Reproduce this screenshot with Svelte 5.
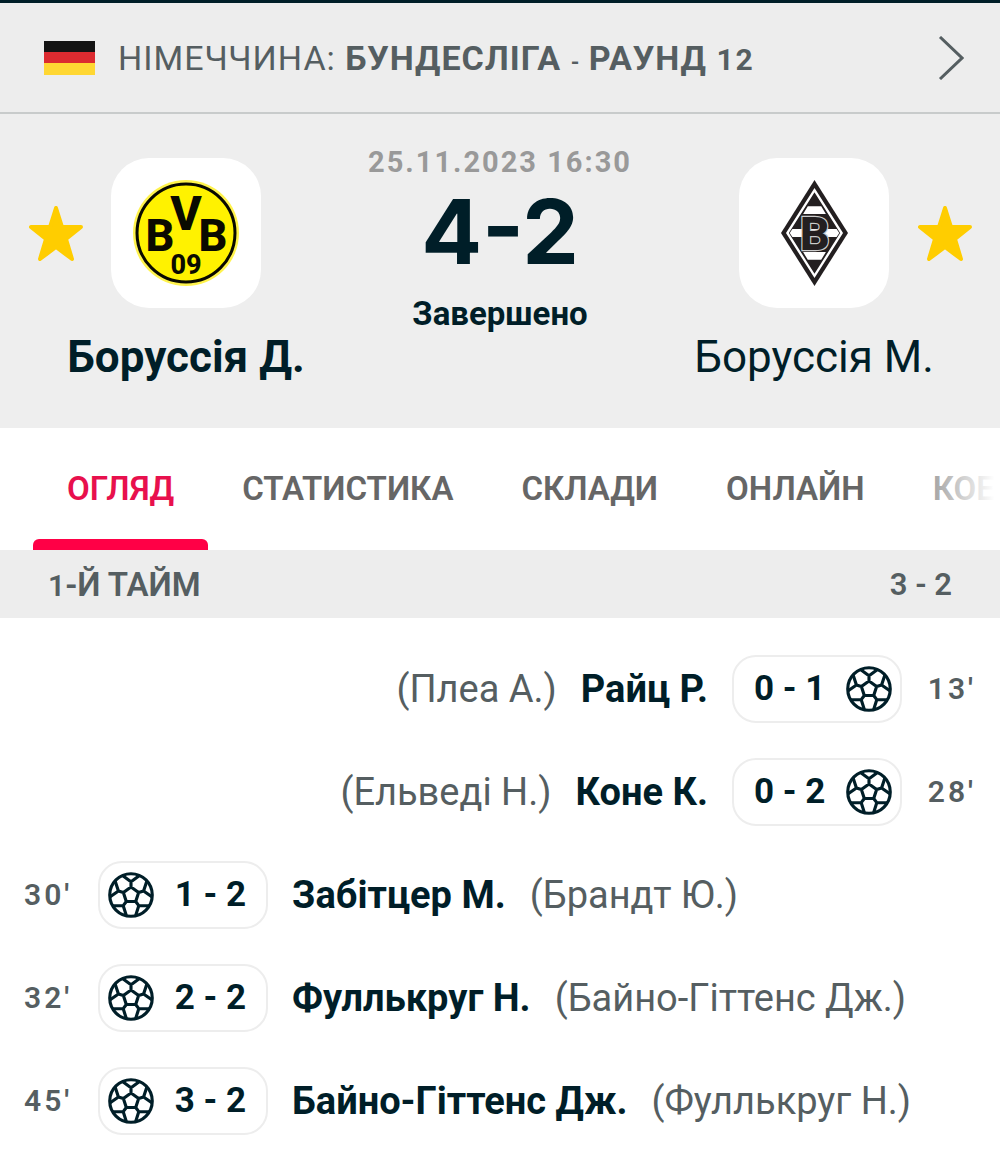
<script>
  const tabs = ['ОГЛЯД', 'СТАТИСТИКА', 'СКЛАДИ', 'ОНЛАЙН', 'КОЕФІЦІЄНТИ'];
  let active = $state(0);
  let favourites = $state([true, true]);

  const goals = [
    { side: 'away', minute: "13'", score: '0 - 1', player: 'Райц Р.', assist: '(Плеа А.)' },
    { side: 'away', minute: "28'", score: '0 - 2', player: 'Коне К.', assist: '(Ельведі Н.)' },
    { side: 'home', minute: "30'", score: '1 - 2', player: 'Забітцер М.', assist: '(Брандт Ю.)' },
    { side: 'home', minute: "32'", score: '2 - 2', player: 'Фуллькруг Н.', assist: '(Байно-Гіттенс Дж.)' },
    { side: 'home', minute: "45'", score: '3 - 2', player: 'Байно-Гіттенс Дж.', assist: '(Фуллькруг Н.)' }
  ];

  // Seams of the football: a centre pentagon, five spokes and five rim patches.
  const at = (r, deg) => {
    const a = (deg * Math.PI) / 180;
    return `${(r * Math.cos(a)).toFixed(1)} ${(r * Math.sin(a)).toFixed(1)}`;
  };
  const angles = [-90, -18, 54, 126, 198];
  const seams =
    'M' + angles.map((a) => at(23, a)).join('L') + 'Z' +
    angles
      .map((a) => `M${at(23, a)}L${at(38, a)}M${at(60, a - 23)}L${at(38, a)}L${at(60, a + 23)}`)
      .join('');
</script>

{#snippet star(i, name)}
  <button
    class="star"
    class:off={!favourites[i]}
    aria-label={name}
    aria-pressed={favourites[i]}
    onclick={() => (favourites[i] = !favourites[i])}
  >
    <svg viewBox="0 0 56 57" width="56" height="57" aria-hidden="true">
      <path d="M28 3 L34 22 H53 L38 34 L44 54 L28 42 L12 54 L18 34 L3 22 H22 Z" />
    </svg>
  </button>
{/snippet}

<main>
  <a class="league" href="#league">
    <svg class="flag" viewBox="0 0 51 34" width="51" height="34" aria-hidden="true">
      <path fill="#141414" d="M0 0h51v12H0z" />
      <path fill="#dc2b30" d="M0 11h51v12H0z" />
      <path fill="#ffd733" d="M0 22h51v12H0z" />
    </svg>
    <span class="league-name">НІМЕЧЧИНА: <b>БУНДЕСЛІГА <span class="dash">-</span> РАУНД <span class="num">12</span></b></span>
    <svg class="chevron" viewBox="0 0 26 44" width="26" height="44" aria-hidden="true">
      <path d="M2 1 L24 22 L2 43" />
    </svg>
  </a>

  <section class="match">
    <div class="team home">
      {@render star(0, 'Боруссія Д.')}
      <div class="crest">
        <svg viewBox="0 0 106 106" width="106" height="106" aria-hidden="true">
          <circle cx="53" cy="53" r="53" fill="#fff34d" />
          <circle cx="53" cy="53" r="49" fill="#fff200" stroke="#0a0a00" stroke-width="3" />
          <g class="bvb">
            <text x="27" y="71" font-size="45">B</text>
            <text x="53" y="50" font-size="48">V</text>
            <text x="80" y="71" font-size="45">B</text>
            <text x="53" y="94" font-size="27">09</text>
          </g>
        </svg>
      </div>
      <h2>Боруссія Д.</h2>
    </div>

    <div class="result">
      <time datetime="2023-11-25T16:30">25.11.2023 16:30</time>
      <strong class="score">4-2</strong>
      <span class="status">Завершено</span>
    </div>

    <div class="team away">
      <div class="crest">
        <svg viewBox="0 0 200 316" width="67" height="106" aria-hidden="true">
          <path d="M100 0 L200 158 L100 316 L0 158 Z" fill="#231f20" />
          <path d="M100 30 L181 158 L100 286 L19 158 Z" fill="#231f20" stroke="#fff" stroke-width="7" />
          <path d="M80 78 H120 L134 101 H66 Z M66 215 H134 L120 238 H80 Z" fill="#fff" />
          <path d="M34 146 H166 L174 158 L166 170 H34 L26 158 Z" fill="#fff" />
          <text class="bmg" x="101" y="208" font-size="140">B</text>
        </svg>
      </div>
      {@render star(1, 'Боруссія М.')}
      <h2>Боруссія М.</h2>
    </div>
  </section>

  <nav class="tabs">
    {#each tabs as tab, i}
      <button class="tab" class:active={active === i} onclick={() => (active = i)}>{tab}</button>
    {/each}
  </nav>

  <header class="period">
    <span><span class="num">1</span>-Й ТАЙМ</span>
    <span class="total">3 - 2</span>
  </header>

  <ul class="goals">
    {#each goals as goal}
      <li class={goal.side}>
        <span class="minute">{goal.minute}</span>
        <span class="pill">
          <svg viewBox="-66 -66 132 132" width="46" height="46" aria-hidden="true">
            <circle r="61" />
            <path d={seams} />
          </svg>
          <b>{goal.score}</b>
        </span>
        <b class="player">{goal.player}</b>
        <span class="assist">{goal.assist}</span>
      </li>
    {/each}
  </ul>
</main>

<style>
  :global(body) {
    margin: 0;
    background: #fff;
  }
  main {
    overflow: hidden;
    border-top: 3px solid #001e28;
    color: #001e28;
    font-family: Roboto, 'Open Sans', sans-serif;
  }
  button {
    padding: 0;
    border: 0;
    background: none;
    font: inherit;
    cursor: pointer;
  }
  .num {
    font-size: 30px;
  }
  .league {
    display: flex;
    align-items: center;
    box-sizing: border-box;
    height: 111px;
    padding: 0 36px 0 44px;
    border-bottom: 2px solid #c8cbcb;
    background: #ededed;
    color: #555e61;
    font-size: 34px;
    letter-spacing: 1px;
    text-decoration: none;
    white-space: nowrap;
  }
  .league b {
    font-weight: 700;
  }
  .league .num {
    letter-spacing: 2px;
  }
  .league .dash {
    font-size: 22px;
    letter-spacing: 0;
  }
  .league-name {
    flex: 1;
    margin-left: 23px;
  }
  .chevron path {
    fill: none;
    stroke: #555e61;
    stroke-width: 3;
  }
  .match {
    display: grid;
    grid-template-columns: 1fr 256px 1fr;
    padding: 44px 0;
    background: #eee;
  }
  .team {
    display: grid;
    grid-template-columns: 1fr 150px 1fr;
    align-content: start;
    align-items: center;
    justify-items: center;
  }
  .crest {
    display: grid;
    grid-column: 2;
    place-items: center;
    width: 150px;
    height: 150px;
    border-radius: 38px;
    background: #fff;
  }
  .bvb,
  .bmg {
    font-family: Roboto, sans-serif;
    font-weight: 800;
    text-anchor: middle;
  }
  .bvb {
    fill: #0a0a00;
  }
  .bmg {
    fill: #231f20;
    stroke: #ccc;
    stroke-width: 7;
    paint-order: stroke;
  }
  .star svg {
    display: block;
    fill: #ffcd00;
    stroke: #ffcd00;
    stroke-width: 4;
    stroke-linejoin: round;
  }
  .star.off svg {
    fill: none;
  }
  h2 {
    grid-column: 1 / -1;
    margin: 22px 0 0;
    font-size: 44px;
    font-weight: 700;
    line-height: 54px;
  }
  .away h2 {
    font-weight: 400;
  }
  .result {
    display: flex;
    flex-direction: column;
    align-items: center;
    margin-top: -14px;
    white-space: nowrap;
  }
  time {
    color: #999;
    font-size: 29px;
    font-weight: 700;
    letter-spacing: 2px;
    line-height: 36px;
  }
  .score {
    font-family: Inter, Roboto, sans-serif;
    font-size: 90px;
    font-weight: 700;
    line-height: 104px;
  }
  .status {
    margin-top: 10px;
    font-size: 33px;
    font-weight: 700;
    line-height: 40px;
  }
  .tabs {
    position: relative;
    display: flex;
    height: 122px;
    padding-left: 33px;
    overflow: hidden;
  }
  .tabs::after {
    position: absolute;
    inset: 0 0 0 auto;
    width: 110px;
    background: linear-gradient(90deg, #fff0, #fff 95%);
    content: '';
    pointer-events: none;
  }
  .tab {
    position: relative;
    flex: none;
    padding: 0 34px 2px;
    color: #666;
    font-size: 33px;
    font-weight: 600;
  }
  .tab.active {
    color: #e8104d;
  }
  .tab.active::after {
    position: absolute;
    inset: auto 0 0;
    height: 11px;
    border-radius: 6px 6px 0 0;
    background: #ff0046;
    content: '';
  }
  .period {
    display: flex;
    align-items: center;
    justify-content: space-between;
    height: 68px;
    padding: 0 48px;
    background: #ededed;
    color: #555e61;
    font-size: 33px;
    font-weight: 600;
  }
  .total {
    font-size: 31px;
  }
  .goals {
    margin: 0;
    padding: 19px 24px 5px;
    list-style: none;
  }
  li {
    display: flex;
    align-items: center;
    height: 103px;
    white-space: nowrap;
  }
  li.away,
  .away .pill {
    flex-direction: row-reverse;
  }
  .minute {
    width: 50px;
    color: #555e61;
    font-size: 30px;
    font-weight: 600;
    letter-spacing: 3px;
  }
  .away .minute {
    text-align: right;
  }
  .pill {
    display: flex;
    align-items: center;
    justify-content: space-between;
    box-sizing: border-box;
    width: 170px;
    height: 68px;
    margin: 0 24px;
    padding: 0 20px 0 8px;
    border: 2px solid #ededed;
    border-radius: 24px;
    font-size: 35px;
  }
  .away .pill {
    padding: 0 8px 0 20px;
  }
  .pill svg {
    fill: none;
    stroke: #001e28;
    stroke-width: 9;
    stroke-linejoin: round;
  }
  .player {
    font-size: 38px;
  }
  .assist {
    margin: 0 24px;
    color: #555e61;
    font-size: 38px;
  }
</style>
